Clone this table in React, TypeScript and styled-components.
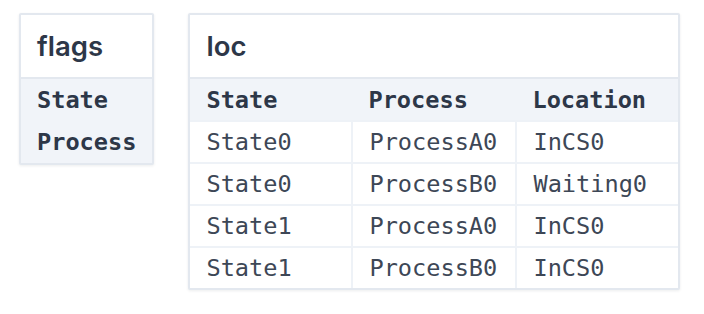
import React from 'react';
import styled, { createGlobalStyle } from 'styled-components';

const GlobalStyle = createGlobalStyle`
  body {
    margin: 0;
    background: #ffffff;
    font-family: Inter, "Liberation Sans", sans-serif;
  }
`;

const Page = styled.div`
  display: flex;
  align-items: flex-start;
  gap: 34px;
  padding: 13px 19px;
`;

const Card = styled.div`
  background: #ffffff;
  border: 2px solid #e3e8ef;
  border-radius: 2px;
  box-shadow: 0 1px 3px rgba(15, 23, 42, 0.08);
`;

const Title = styled.div`
  height: 62px;
  display: flex;
  align-items: center;
  padding: 0 16px;
  font-size: 27.5px;
  font-weight: 600;
  color: #2d3748;
  border-bottom: 2px solid #e3e8ef;
`;

const FieldList = styled.div`
  background: #f1f4f9;
`;

const Field = styled.div`
  height: 42px;
  display: flex;
  align-items: center;
  padding: 0 16px;
  font-family: "DejaVu Sans Mono", monospace;
  font-size: 23.6px;
  font-weight: 700;
  color: #2d3748;
`;

const Table = styled.table`
  width: 488px;
  table-layout: fixed;
  border-collapse: collapse;
  font-family: "DejaVu Sans Mono", monospace;
  font-size: 23.6px;
`;

const HeadCell = styled.th<{ $w: number }>`
  box-sizing: border-box;
  width: ${(p) => p.$w}px;
  height: 42px;
  padding: 0 16px;
  text-align: left;
  font-weight: 700;
  color: #2d3748;
  background: #f1f4f9;
`;

const Cell = styled.td<{ $first?: boolean }>`
  height: 40px;
  padding: 0 16px;
  color: #3d4756;
  border-top: 2px solid #eef2f7;
  border-left: ${(p) => (p.$first ? 'none' : '2px solid #eef2f7')};
`;

const columns = [
  { name: 'State', w: 162 },
  { name: 'Process', w: 164 },
  { name: 'Location', w: 162 },
];

const rows = [
  ['State0', 'ProcessA0', 'InCS0'],
  ['State0', 'ProcessB0', 'Waiting0'],
  ['State1', 'ProcessA0', 'InCS0'],
  ['State1', 'ProcessB0', 'InCS0'],
];

const App: React.FC = () => {
  return (
    <>
      <GlobalStyle />
      <Page>
        <Card>
          <Title>flags</Title>
          <FieldList>
            <Field>State</Field>
            <Field>Process</Field>
          </FieldList>
        </Card>
        <Card>
          <Title>loc</Title>
          <Table>
            <thead>
              <tr>
                {columns.map((c) => (
                  <HeadCell key={c.name} $w={c.w}>
                    {c.name}
                  </HeadCell>
                ))}
              </tr>
            </thead>
            <tbody>
              {rows.map((r, i) => (
                <tr key={i}>
                  {r.map((c, j) => (
                    <Cell key={j} $first={j === 0}>
                      {c}
                    </Cell>
                  ))}
                </tr>
              ))}
            </tbody>
          </Table>
        </Card>
      </Page>
    </>
  );
};

export default App;
